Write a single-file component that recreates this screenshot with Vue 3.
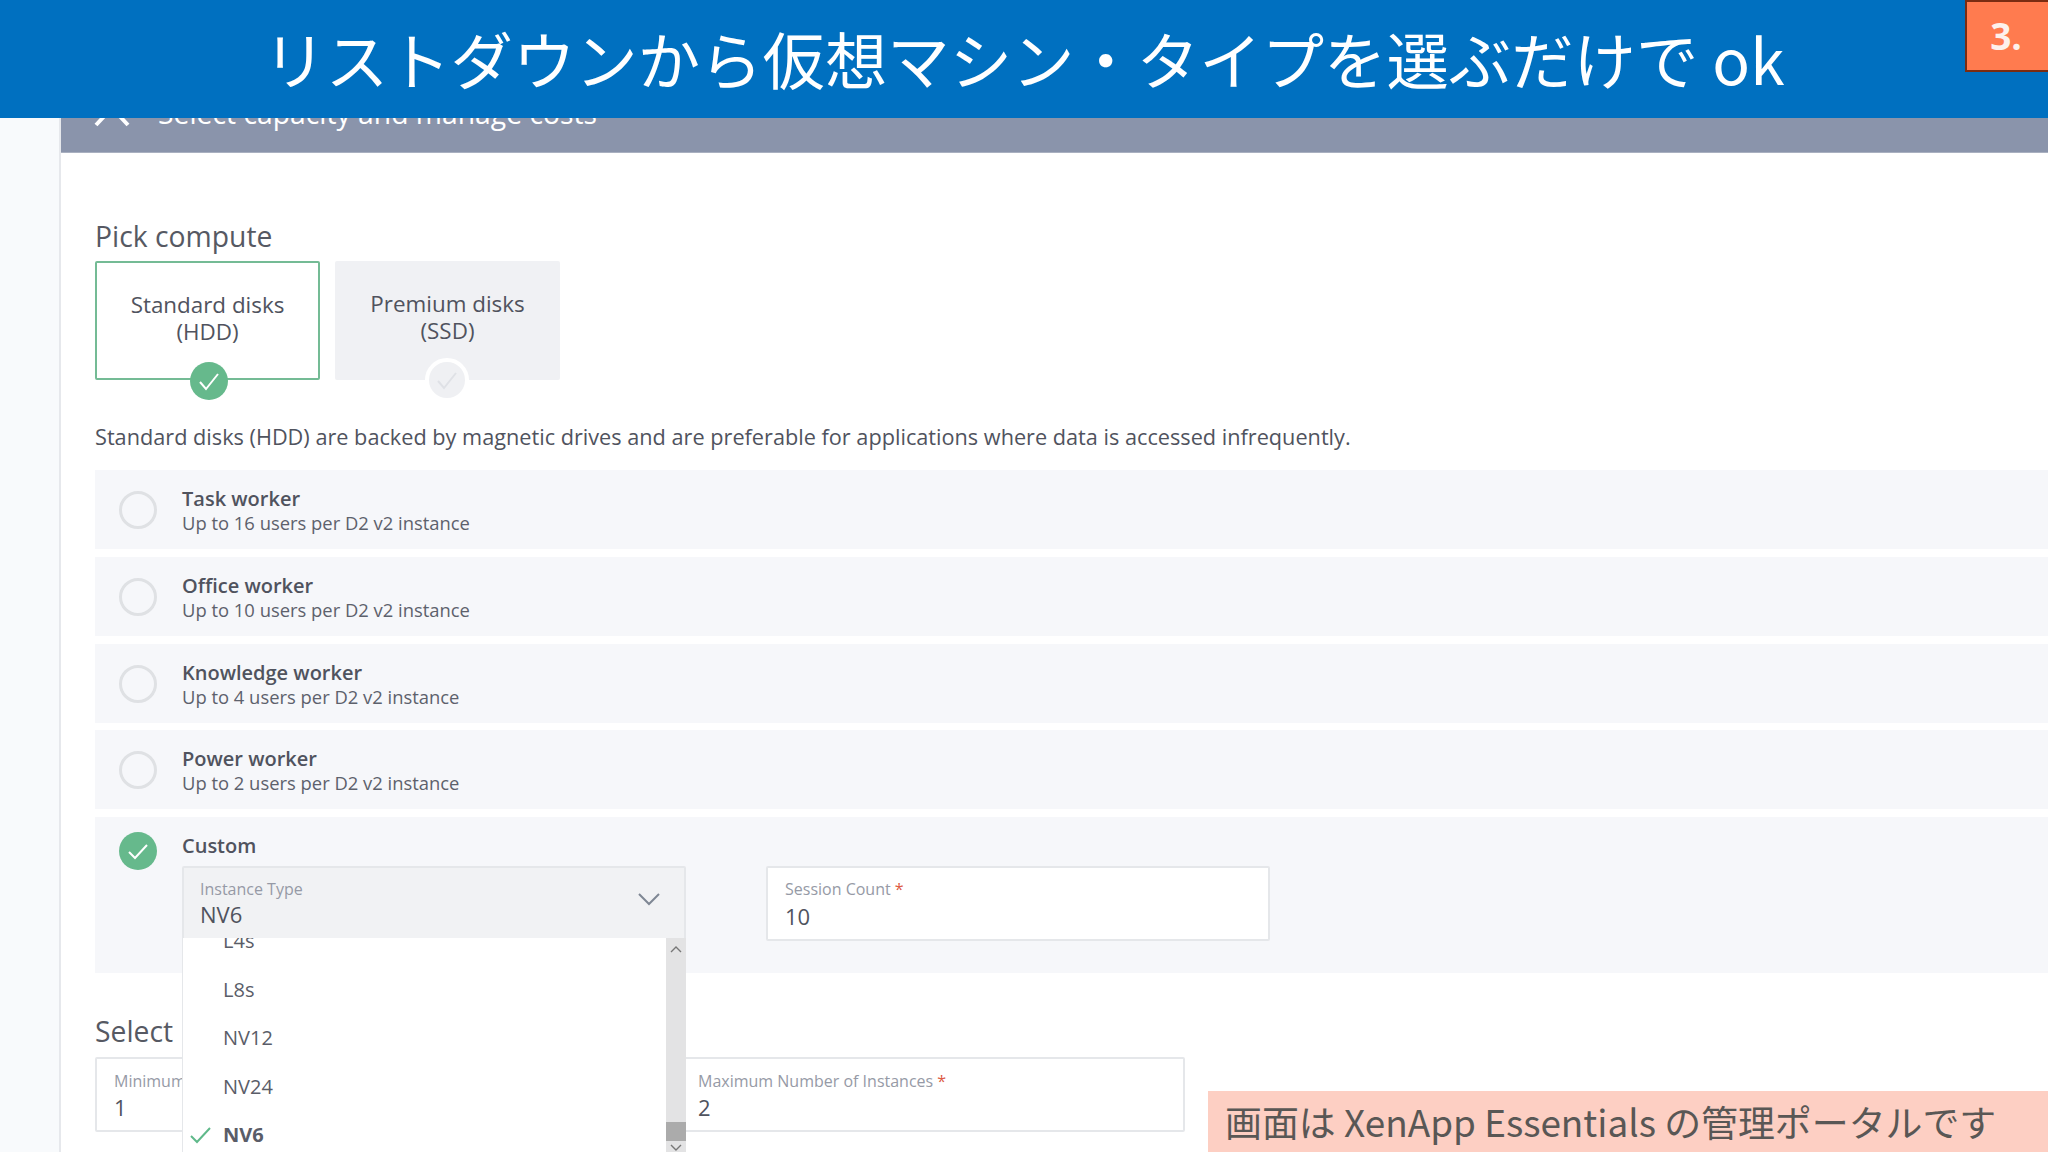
<template>
  <div class="slide">
    <div class="shell">
      <aside class="side"></aside>
      <main class="main">
        <div class="step-bar">
          <svg class="step-chevron" width="36" height="22" viewBox="0 0 36 22">
            <path d="M2 20 L18 3 L34 20" fill="none" stroke="#fff" stroke-width="4" />
          </svg>
          <span>Select capacity and manage costs</span>
        </div>

        <div class="content">
          <h2 class="heading">Pick compute</h2>
          <div class="cards">
            <div class="card is-on">
              <span>Standard disks<br />(HDD)</span>
              <svg class="card-check" width="38" height="38" viewBox="0 0 38 38">
                <circle cx="19" cy="19" r="19" fill="#66b98c" />
                <path d="M10 20 L16 27 L28 12" fill="none" stroke="#fff" stroke-width="2" />
              </svg>
            </div>
            <div class="card is-off">
              <span>Premium disks<br />(SSD)</span>
              <svg class="card-check off" width="44" height="44" viewBox="0 0 44 44">
                <circle cx="22" cy="22" r="20" fill="#eff0f3" stroke="#fff" stroke-width="4" />
                <path d="M13 23 L19 30 L31 15" fill="none" stroke="#dfe1e6" stroke-width="2" />
              </svg>
            </div>
          </div>

          <p class="desc">Standard disks (HDD) are backed by magnetic drives and are preferable for applications where data is accessed infrequently.</p>

          <div class="rows">
            <div v-for="w in workers" :key="w.name" class="row">
              <span class="radio"></span>
              <div class="row-text">
                <div class="row-title">{{ w.name }}</div>
                <div class="row-sub">{{ w.sub }}</div>
              </div>
            </div>

            <div class="row custom">
              <svg class="radio-on" width="38" height="38" viewBox="0 0 38 38">
                <circle cx="19" cy="19" r="19" fill="#66b98c" />
                <path d="M10 20 L16 26 L28 13" fill="none" stroke="#fff" stroke-width="2" />
              </svg>
              <div class="custom-body">
                <div class="row-title">Custom</div>
                <div class="fields">
                  <div class="field select">
                    <div class="label">Instance Type</div>
                    <div class="value">NV6</div>
                    <svg class="select-arrow" width="24" height="14" viewBox="0 0 24 14">
                      <path d="M2 2 L12 12 L22 2" fill="none" stroke="#7f8794" stroke-width="2" />
                    </svg>
                    <div class="dropdown">
                      <ul class="options">
                        <li v-for="o in options" :key="o" :class="{ picked: o === 'NV6' }">
                          <svg v-if="o === 'NV6'" class="opt-check" width="22" height="18" viewBox="0 0 22 18">
                            <path d="M1 10 L7 16 L20 2" fill="none" stroke="#5fb98a" stroke-width="2" />
                          </svg>
                          {{ o }}
                        </li>
                      </ul>
                      <div class="scrollbar">
                        <svg width="20" height="10" viewBox="0 0 20 10" class="sb-up">
                          <path d="M5 8 L10 3 L15 8" fill="none" stroke="#777" stroke-width="1.4" />
                        </svg>
                        <div class="sb-thumb"></div>
                        <svg width="20" height="10" viewBox="0 0 20 10" class="sb-down">
                          <path d="M5 2 L10 7 L15 2" fill="none" stroke="#777" stroke-width="1.4" />
                        </svg>
                      </div>
                    </div>
                  </div>
                  <div class="field">
                    <div class="label">Session Count <em>*</em></div>
                    <div class="value">10</div>
                  </div>
                </div>
              </div>
            </div>
          </div>

          <h2 class="heading select-head">Select</h2>
          <div class="scale-fields">
            <div class="field">
              <div class="label">Minimum Number of Instances <em>*</em></div>
              <div class="value">1</div>
            </div>
            <div class="field">
              <div class="label">Maximum Number of Instances <em>*</em></div>
              <div class="value">2</div>
            </div>
          </div>
        </div>
      </main>
    </div>

    <header class="banner">リストダウンから仮想マシン・タイプを選ぶだけで ok</header>
    <div class="badge">3.</div>
    <div class="note">画面は XenApp Essentials の管理ポータルです</div>
  </div>
</template>

<script setup>
const workers = [
  { name: 'Task worker', sub: 'Up to 16 users per D2 v2 instance' },
  { name: 'Office worker', sub: 'Up to 10 users per D2 v2 instance' },
  { name: 'Knowledge worker', sub: 'Up to 4 users per D2 v2 instance' },
  { name: 'Power worker', sub: 'Up to 2 users per D2 v2 instance' }
];

const options = ['L4s', 'L8s', 'NV12', 'NV24', 'NV6'];
</script>

<style>
html, body {
  margin: 0;
  overflow: hidden;
}
</style>

<style scoped>
.slide {
  position: relative;
  width: 2048px;
  height: 1152px;
  overflow: hidden;
  background: #fff;
  font-family: "Open Sans", "Noto Sans CJK JP", sans-serif;
  color: #50535e;
}

.shell {
  display: flex;
  height: 100%;
}

.side {
  width: 59px;
  flex: none;
  background: #f8fafc;
  border-right: 2px solid #e6e8ec;
}

.main {
  flex: 1;
  min-width: 0;
  padding-top: 88px;
}

.step-bar {
  height: 65px;
  display: flex;
  align-items: flex-start;
  gap: 28px;
  padding: 8px 0 0 33px;
  box-sizing: border-box;
  background: #8a94ab;
  border-bottom: 1px solid #a9b0c0;
  color: #fff;
  font-size: 28.3px;
  line-height: 34px;
}

.step-chevron {
  margin-top: 9px;
}

.content {
  padding: 65px 0 0 34px;
}

.heading {
  margin: 0;
  font-size: 28.3px;
  line-height: 36px;
  font-weight: 400;
  color: #565963;
}

.cards {
  display: flex;
  gap: 15px;
  margin-top: 7px;
}

.card {
  position: relative;
  width: 225px;
  height: 119px;
  box-sizing: border-box;
  display: flex;
  align-items: center;
  justify-content: center;
  text-align: center;
  padding-bottom: 5px;
  font-size: 22.4px;
  line-height: 27.5px;
  border-radius: 2px;
}

.card.is-on {
  border: 2px solid #74bb95;
}

.card.is-off {
  background: #f0f1f4;
  padding-bottom: 7px;
}

.card-check {
  position: absolute;
  left: 93px;
  bottom: -22px;
}

.card-check.off {
  left: 90px;
  bottom: -22px;
}

.desc {
  margin: 42px 0 0;
  font-size: 21.7px;
  line-height: 30px;
}

.rows {
  display: flex;
  flex-direction: column;
  gap: 7.75px;
  margin-top: 18px;
}

.row {
  display: flex;
  height: 79px;
  box-sizing: border-box;
  padding: 21px 0 0 24px;
  gap: 25px;
  background: #f6f7fa;
}

.radio {
  width: 38px;
  height: 38px;
  flex: none;
  box-sizing: border-box;
  border: 3px solid #dfe1e4;
  border-radius: 50%;
}

.radio-on {
  flex: none;
  margin-top: 15px;
}

.row-text {
  margin-top: -4px;
}

.row-title {
  font-size: 20px;
  line-height: 24px;
  font-weight: 600;
}

.row-sub {
  font-size: 18.4px;
  line-height: 23px;
  color: #5d616c;
}

.row.custom {
  height: 156px;
  padding-top: 0;
}

.custom-body {
  padding-top: 17px;
}

.fields {
  display: flex;
  gap: 80px;
  margin-top: 8px;
}

.field {
  position: relative;
  width: 504px;
  height: 75px;
  box-sizing: border-box;
  padding: 11px 17px 0;
  background: #fff;
  border: 2px solid #e5e7ea;
  border-radius: 2px;
}

.field.select {
  height: 74px;
  background: #f1f2f4;
  padding-left: 16px;
}

.field.select .value {
  margin-top: 1px;
}

.label {
  font-size: 16px;
  line-height: 20px;
  color: #969aa6;
  white-space: nowrap;
}

.label em {
  font-style: normal;
  color: #dd5a43;
}

.value {
  margin-top: 3px;
  font-size: 22px;
  line-height: 28px;
  color: #50535e;
}

.select-arrow {
  position: absolute;
  right: 23px;
  top: 24px;
}

.dropdown {
  position: absolute;
  z-index: 2;
  left: -2px;
  top: 70px;
  width: 504px;
  height: 214px;
  display: flex;
  overflow: hidden;
  background: #fff;
  border-left: 1px solid #e5e7ea;
  box-sizing: border-box;
}

.options {
  flex: 1;
  margin: -21px 0 0;
  padding: 0;
  list-style: none;
}

.options li {
  position: relative;
  height: 48.5px;
  line-height: 48px;
  padding-left: 40px;
  font-size: 20px;
  color: #5a5d68;
}

.options li.picked {
  font-weight: 700;
}

.opt-check {
  position: absolute;
  left: 7px;
  top: 15px;
}

.scrollbar {
  position: relative;
  width: 20px;
  background: #e3e3e4;
}

.sb-up {
  position: absolute;
  top: 6px;
  left: 0;
}

.sb-thumb {
  position: absolute;
  top: 184px;
  width: 100%;
  height: 19px;
  background: #ababab;
}

.sb-down {
  position: absolute;
  top: 205px;
  left: 0;
}

.select-head {
  margin-top: 40px;
}

.scale-fields {
  display: flex;
  gap: 78px;
  margin-top: 8px;
}

.scale-fields .field {
  width: 506px;
  height: 75px;
  padding-top: 12px;
}

.scale-fields .value {
  margin-top: 2px;
}

.banner {
  position: absolute;
  top: 0;
  left: 0;
  right: 0;
  height: 118px;
  box-sizing: border-box;
  padding-bottom: 3px;
  display: flex;
  align-items: center;
  justify-content: center;
  background: #0070c0;
  color: #fff;
  font-size: 62.4px;
  font-weight: 400;
  font-family: "Noto Sans CJK JP", "Open Sans", sans-serif;
}

.badge {
  position: absolute;
  top: 0;
  right: 0;
  width: 83px;
  height: 72px;
  box-sizing: border-box;
  padding: 0 3px 2px 0;
  display: flex;
  align-items: center;
  justify-content: center;
  background: #ff7b4f;
  border: 2px solid #7a2c12;
  border-right: 0;
  color: #fdf1ec;
  font-size: 37px;
  font-weight: 700;
}

.note {
  position: absolute;
  left: 1208px;
  right: 0;
  bottom: 0;
  height: 61px;
  box-sizing: border-box;
  padding: 0 0 2px 17px;
  display: flex;
  align-items: center;
  background: #fdcfc3;
  color: #595755;
  font-size: 36.9px;
  font-weight: 400;
  font-family: "Noto Sans CJK JP", "Open Sans", sans-serif;
}
</style>
